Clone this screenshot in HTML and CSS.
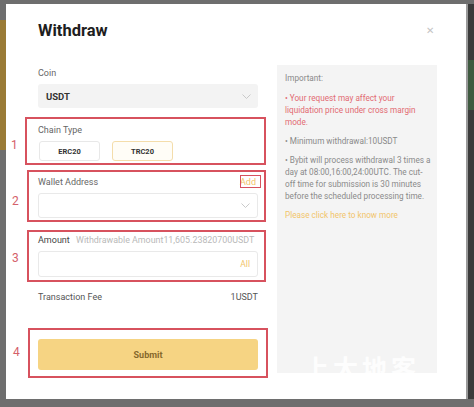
FILE: index.html
```html
<!DOCTYPE html>
<html lang="en">
<head>
<meta charset="utf-8">
<title>Withdraw</title>
<link rel="stylesheet" href="styles.css">
</head>
<body>
<div class="page">
  <div class="edge-left"><div class="edge-left-tint"></div></div>
  <div class="modal">
    <div class="header">
      <h1 class="title">Withdraw</h1>
      <span class="close">&#x2715;</span>
    </div>
    <div class="body">
      <div class="form">
        <div class="label label-coin">Coin</div>
        <div class="select">
          <span class="select-value">USDT</span>
          <svg class="chev" width="9" height="5" viewBox="0 0 9 5"><path d="M0.5 0.5 L4.5 4.5 L8.5 0.5" fill="none" stroke="#c4c4c4" stroke-width="0.9"/></svg>
        </div>
        <div class="label label-gap">Chain Type</div>
        <div class="chains">
          <div class="chain">ERC20</div>
          <div class="chain chain-active">TRC20</div>
        </div>
        <div class="label label-gap label-row">
          <span>Wallet Address</span>
          <span class="add">Add</span>
        </div>
        <div class="input">
          <span></span>
          <svg class="chev" width="9" height="5" viewBox="0 0 9 5"><path d="M0.5 0.5 L4.5 4.5 L8.5 0.5" fill="none" stroke="#c4c4c4" stroke-width="0.9"/></svg>
        </div>
        <div class="label label-gap">
          <span class="amount-label">Amount</span>
          <span class="avail">Withdrawable Amount11,605.23820700USDT</span>
        </div>
        <div class="input input-amount">
          <span></span>
          <span class="all">All</span>
        </div>
        <div class="fee">
          <span>Transaction Fee</span>
          <span>1USDT</span>
        </div>
        <button class="submit" type="button">Submit</button>
      </div>
      <div class="notice">
        <p class="notice-title">Important:</p>
        <p class="notice-warn">• Your request may affect your liquidation price under cross margin mode.</p>
        <p>• Minimum withdrawal:10USDT</p>
        <p>• Bybit will process withdrawal 3 times a day at 08:00,16:00,24:00UTC. The cut-off time for submission is 30 minutes before the scheduled processing time.</p>
        <p class="notice-link">Please click here to know more</p>
      </div>
    </div>

    <div class="mark mark-1"></div>
    <div class="mark mark-2"></div>
    <div class="mark mark-3"></div>
    <div class="mark mark-4"></div>
    <div class="mark mark-add"></div>
    <span class="num num-1">1</span>
    <span class="num num-2">2</span>
    <span class="num num-3">3</span>
    <span class="num num-4">4</span>
    <span class="watermark">上大地客</span>
  </div>
  <div class="edge-right"><div class="edge-right-tint"></div></div>
</div>
</body>
</html>
```

FILE: styles.css
```css
* { box-sizing: border-box; }
html, body { margin: 0; padding: 0; }
body {
  background: #6e6e6e;
  font-family: Roboto, "Noto Sans", Arial, sans-serif;
  width: 474px;
  height: 407px;
  overflow: hidden;
}
.page {
  display: flex;
  height: 407px;
  padding: 4px 0 8px 0;
}
.edge-left {
  width: 6px;
  flex: none;
  padding-top: 16px;
}
.edge-left-tint {
  height: 130px;
  background: #9a7b36;
}
.edge-right {
  width: 8px;
  flex: none;
  background: #3b3b3b;
  border-left: 2px solid #9a9a9a;
  padding-top: 56px;
}
.edge-right-tint {
  height: 50px;
  background: #3f5a40;
}
.modal {
  position: relative;
  width: 460px;
  height: 395px;
  background: #fff;
  padding: 0 29px 0 32px;
  flex: none;
}
.header {
  display: flex;
  justify-content: space-between;
  align-items: center;
  padding-top: 14px;
  height: 40px;
}
.title {
  margin: 0;
  font-size: 16.5px;
  line-height: 22px;
  font-weight: 700;
  color: #1e1e1e;
}
.close {
  font-size: 10px;
  color: #c4c4c4;
  padding-right: 3px;
  line-height: 22px;
}
.body {
  display: grid;
  grid-template-columns: 220px 160px;
  column-gap: 19px;
  margin-top: 21px;
  align-items: start;
}
.form { display: flex; flex-direction: column; }
.label {
  font-size: 9px;
  line-height: 12px;
  color: #666;
  margin-bottom: 5px;
}
.label-coin { margin-top: 2px; }
.label-gap { margin-top: 16px; }
.label-row { display: flex; justify-content: space-between; margin-top: 15px; }
.add { color: #f2c46a; padding-right: 2px; }
.amount-label { color: #444; margin-right: 4px; }
.avail { color: #b9b9b9; font-size: 8.9px; }
.select {
  height: 24px;
  background: #f3f3f3;
  border-radius: 3px;
  display: flex;
  align-items: center;
  justify-content: space-between;
  padding: 0 7px 0 8px;
}
.select-value { font-size: 9.5px; font-weight: 700; color: #333; }
.chains { display: flex; gap: 12px; padding-left: 1px; }
.chain {
  width: 61px;
  height: 20px;
  border: 1px solid #e8e8e8;
  border-radius: 3px;
  display: flex;
  align-items: center;
  justify-content: center;
  font-size: 7.5px;
  font-weight: 700;
  color: #333;
}
.chain-active { border-color: #f4ddab; background: #fffdf7; }
.input {
  height: 25px;
  border: 1px solid #e9e9e9;
  border-radius: 3px;
  display: flex;
  align-items: center;
  justify-content: space-between;
  padding: 0 7px 0 8px;
}
.input-amount { height: 26px; }
.all { font-size: 8.5px; color: #f2c46a; }
.fee {
  display: flex;
  justify-content: space-between;
  font-size: 9px;
  line-height: 12px;
  color: #555;
  margin-top: 14px;
}
.submit {
  margin-top: 36px;
  height: 31px;
  border: 0;
  border-radius: 3px;
  background: #f6d483;
  color: #86692c;
  font-family: inherit;
  font-size: 9px;
  font-weight: 700;
  padding: 0;
}
.notice {
  background: #f4f4f4;
  height: 308px;
  padding: 7px 5px 0 8px;
  font-size: 8.2px;
  line-height: 12px;
  color: #8a8a8a;
}
.notice p { margin: 0 0 7px 0; }
.notice .notice-title { margin-bottom: 8px; }
.notice-warn { color: #e26a72; }
.notice-link { color: #f2c46a; }

.mark {
  position: absolute;
  border: 2px solid #d7525e;
}
.mark-1 { left: 19px; top: 113px; width: 241px; height: 48px; }
.mark-2 { left: 21px; top: 166px; width: 239px; height: 52px; }
.mark-3 { left: 21px; top: 226px; width: 239px; height: 52px; }
.mark-4 { left: 22px; top: 324px; width: 240px; height: 50px; }
.mark-add { left: 234px; top: 171px; width: 21px; height: 13px; border-width: 1.5px; }
.num {
  position: absolute;
  font-size: 12px;
  line-height: 14px;
  color: #d4606a;
}
.num-1 { left: 5px; top: 134px; }
.num-2 { left: 6px; top: 190px; }
.num-3 { left: 6px; top: 247px; }
.num-4 { left: 7px; top: 341px; }
.watermark {
  position: absolute;
  left: 298px;
  top: 348px;
  font-family: "Noto Sans CJK SC", sans-serif;
  font-size: 25px;
  line-height: 30px;
  letter-spacing: 4px;
  color: rgba(255, 255, 255, 0.92);
  font-weight: 700;
}
```
